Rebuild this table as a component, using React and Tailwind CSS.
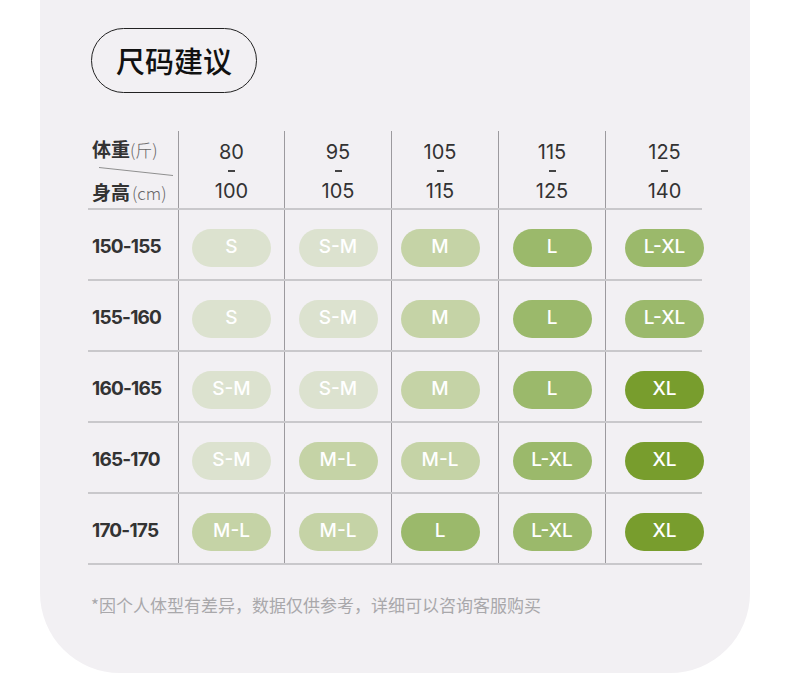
const cjk = "font-['Noto_Sans_CJK_SC','Noto_Sans',sans-serif]";
const num = "font-['Inter','Noto_Sans_CJK_SC',sans-serif]";

const tones = {
  a: "bg-[#dce2cf]",
  b: "bg-[#c5d3a6]",
  c: "bg-[#9bb96b]",
  d: "bg-[#789d2d]",
};

const weights = [
  ["80", "100"],
  ["95", "105"],
  ["105", "115"],
  ["115", "125"],
  ["125", "140"],
];

const rows = [
  { h: "150-155", s: [["S", "a"], ["S-M", "a"], ["M", "b"], ["L", "c"], ["L-XL", "c"]] },
  { h: "155-160", s: [["S", "a"], ["S-M", "a"], ["M", "b"], ["L", "c"], ["L-XL", "c"]] },
  { h: "160-165", s: [["S-M", "a"], ["S-M", "a"], ["M", "b"], ["L", "c"], ["XL", "d"]] },
  { h: "165-170", s: [["S-M", "a"], ["M-L", "b"], ["M-L", "b"], ["L-XL", "c"], ["XL", "d"]] },
  { h: "170-175", s: [["M-L", "b"], ["M-L", "b"], ["L", "c"], ["L-XL", "c"], ["XL", "d"]] },
];

const cellW = ["w-[106px]", "w-[107px]", "w-[107px] pr-[10px]", "w-[107px]", "w-[97px] pl-[21px]"];

function Pill({ label, tone }) {
  return (
    <div
      className={`flex h-[38px] w-[79px] shrink-0 items-center justify-center rounded-full text-[19px] font-medium text-white ${num} ${tones[tone]}`}
    >
      {label}
    </div>
  );
}

export default function App() {
  return (
    <div className="min-h-[683px] bg-white">
      <div className="mx-[40px] h-[673px] w-[710px] rounded-b-[80px] bg-[#f2f0f3] pl-[48px] pt-[28px]">
        <div
          className={`ml-[3px] flex h-[65px] w-[166px] items-center justify-center rounded-full border-[1.5px] border-[#222] text-[29px] font-medium text-[#111] ${cjk}`}
        >
          尺码建议
        </div>

        <div className="mt-[38px] w-[614px]">
          {/* header */}
          <div className="flex h-[79px] border-b-2 border-[#c9c8cb]">
            <div className="relative w-[90px] pl-[4px] pt-[4px]">
              <div className={`flex items-baseline text-[#333] ${cjk}`}>
                <span className="text-[19px] font-bold">体重</span>
                <span className="text-[17px] font-light text-[#666]">(斤)</span>
              </div>
              <svg className="absolute left-[11px] top-[36px]" width="76" height="10">
                <line x1="0" y1="0.5" x2="74" y2="8.5" stroke="#8f8f8f" strokeWidth="1" />
              </svg>
              <div className={`mt-[14px] flex items-baseline text-[#333] ${cjk}`}>
                <span className="text-[19px] font-bold">身高</span>
                <span className="ml-[2px] text-[17px] font-light text-[#666]">(cm)</span>
              </div>
            </div>
            {weights.map(([a, b], i) => (
              <div
                key={a}
                className={`flex flex-col items-center border-l border-[#9c9a9e] pt-[11px] text-[20px] leading-[20px] text-[#333] ${num} ${cellW[i]}`}
              >
                <div>{a}</div>
                <div className="mt-[8px] h-[2px] w-[7px] bg-[#444]" />
                <div className="mt-[9px]">{b}</div>
              </div>
            ))}
          </div>

          {/* body */}
          {rows.map((r) => (
            <div key={r.h} className="flex h-[71px] border-b-2 border-[#c9c8cb]">
              <div
                className={`flex w-[90px] items-center pl-[4px] pt-[6px] text-[19px] font-bold tracking-[-0.8px] text-[#333] ${num}`}
              >
                {r.h}
              </div>
              {r.s.map(([label, tone], i) => (
                <div
                  key={i}
                  className={`flex items-center justify-center border-l border-[#9c9a9e] pt-[6px] ${cellW[i]}`}
                >
                  <Pill label={label} tone={tone} />
                </div>
              ))}
            </div>
          ))}
        </div>

        <p className={`ml-[3px] mt-[27px] text-[17px] text-[#a9a8ab] ${cjk}`}>
          *因个人体型有差异，数据仅供参考，详细可以咨询客服购买
        </p>
      </div>
    </div>
  );
}
